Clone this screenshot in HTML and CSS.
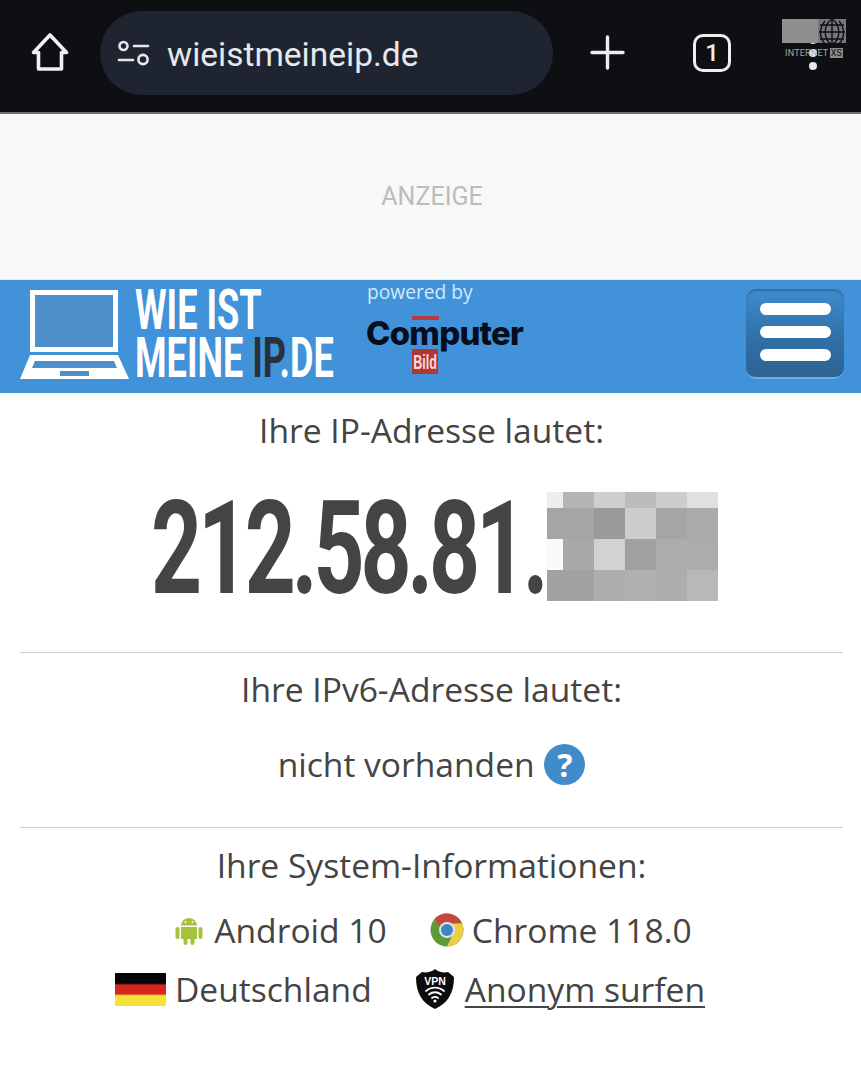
FILE: index.html
```html
<!DOCTYPE html>
<html lang="de">
<head>
    <meta charset="UTF-8">
    <meta name="viewport" content="width=device-width, initial-scale=1.0">
    <title>Wie ist meine IP</title>
    <link rel="stylesheet" href="styles.css">
</head>
<body>

    <!-- Browser toolbar -->
    <div class="toolbar">
        <svg class="home-icon" width="38" height="40" viewBox="0 0 38 40" fill="none" stroke="#f1f1f3" stroke-width="3.6" stroke-linejoin="round" stroke-linecap="round">
            <path d="M2.5 20.5 19 3 35.5 20.5H30.5V37H7.5V20.5Z"/>
        </svg>
        <div class="url-pill">
            <svg width="33" height="26" viewBox="0 0 33 26" fill="none" stroke="#e6e8ee" stroke-width="2.6" stroke-linecap="round">
                <circle cx="6.5" cy="6" r="4"/>
                <path d="M17 6H31"/>
                <path d="M2 20H16"/>
                <circle cx="26" cy="19.5" r="4.6"/>
            </svg>
            <span class="url-text">wieistmeineip.de</span>
        </div>
        <svg class="plus-icon" width="35" height="35" viewBox="0 0 35 35" stroke="#eeeef0" stroke-width="3.4" stroke-linecap="round">
            <path d="M17.5 2V33M2 17.5H33"/>
        </svg>
        <div class="tab-count">1</div>
        <div class="dots">
            <span></span>
            <span></span>
            <span></span>
        </div>
        <!-- Provider watermark over the toolbar -->
        <div class="watermark">
            <svg width="64" height="24" viewBox="0 0 64 24" fill="none" stroke="#111" stroke-width="1">
                <rect width="38" height="24" fill="#8f8f8f" stroke="none"/>
                <rect x="36" width="28" height="24" fill="#77777a" stroke="none"/>
                <path d="M37 13H63M38 6H62M38 20H62M50 0V24" stroke="#101014" stroke-width="1.4"/>
                <path d="M50 0C41 6 41 20 50 26M50 0C59 6 59 20 50 26M43 2C37 9 37 18 43 25M57 2C63 9 63 18 57 25" stroke="#101014" stroke-width="1.4"/>
            </svg>
            <div class="watermark-text">INTERNET <span class="watermark-xs">XS</span></div>
        </div>
    </div>

    <!-- Ad slot -->
    <div class="ad-slot">ANZEIGE</div>

    <!-- Site header -->
    <header class="site-header">
        <svg class="laptop" width="109" height="89" viewBox="0 0 109 89">
            <path d="M10 0H98V62H10Z M15 5V57H93V5Z" fill="#fff" fill-rule="evenodd"/>
            <path fill="#fff" d="M10 65H98L109 89H0Z"/>
            <path fill="#4d90cc" d="M15 5H93V57H15Z"/>
            <path fill="#4d90cc" d="M15 71H94L97 78H12Z"/>
            <path fill="#4d90cc" d="M40 81H69V86H40Z"/>
        </svg>
        <div class="site-name">
            <div class="site-name-line">WIE IST</div>
            <div class="site-name-line">MEINE <span class="site-name-dark">IP</span>.DE</div>
        </div>
        <div class="powered">
            <div class="powered-by">powered by</div>
            <div class="cb-logo">
                <span class="cb-bar"></span>
                <div class="cb-word">Computer</div>
                <div class="cb-bild"><span class="cb-bild-text">Bild</span></div>
            </div>
        </div>
        <div class="menu-button">
            <span></span>
            <span></span>
            <span></span>
        </div>
    </header>

    <main class="content">
        <p class="line line-first">Ihre IP-Adresse lautet:</p>
        <div class="ip-row">
            <div class="ip-box"><span class="ip-text">212.58.81.</span></div>
            <svg class="ip-mosaic" width="171" height="109" viewBox="0 0 171 109" shape-rendering="crispEdges">
                <rect x="0" y="0" width="16" height="16" fill="#eeeeee"/><rect x="16" y="0" width="31" height="16" fill="#b5b5b5"/><rect x="47" y="0" width="31" height="16" fill="#cfcfcf"/><rect x="78" y="0" width="31" height="16" fill="#bcbcbc"/><rect x="109" y="0" width="31" height="16" fill="#cdcdcd"/><rect x="140" y="0" width="31" height="16" fill="#e0e0e0"/>
                <rect x="0" y="16" width="16" height="31" fill="#a5a5a5"/><rect x="16" y="16" width="31" height="31" fill="#a5a5a5"/><rect x="47" y="16" width="31" height="31" fill="#9a9a9a"/><rect x="78" y="16" width="31" height="31" fill="#cdcdcd"/><rect x="109" y="16" width="31" height="31" fill="#a5a5a5"/><rect x="140" y="16" width="31" height="31" fill="#aaaaaa"/>
                <rect x="0" y="47" width="16" height="31" fill="#fafafa"/><rect x="16" y="47" width="31" height="31" fill="#a8a8a8"/><rect x="47" y="47" width="31" height="31" fill="#d2d2d2"/><rect x="78" y="47" width="31" height="31" fill="#a0a0a0"/><rect x="109" y="47" width="31" height="31" fill="#acacac"/><rect x="140" y="47" width="31" height="31" fill="#acacac"/>
                <rect x="0" y="78" width="16" height="31" fill="#a2a2a2"/><rect x="16" y="78" width="31" height="31" fill="#a2a2a2"/><rect x="47" y="78" width="31" height="31" fill="#aeaeae"/><rect x="78" y="78" width="31" height="31" fill="#b0b0b0"/><rect x="109" y="78" width="31" height="31" fill="#adadad"/><rect x="140" y="78" width="31" height="31" fill="#b8b8b8"/>
            </svg>
        </div>

        <hr class="rule rule-ip">

        <p class="line line-v6">Ihre IPv6-Adresse lautet:</p>
        <p class="line line-none">nicht vorhanden <span class="help-badge">?</span></p>

        <hr class="rule rule-v6">

        <p class="line line-system">Ihre System-Informationen:</p>
        <div class="info-row info-row-one">
            <div class="info-item">
                <svg class="icon-android" width="28" height="30" viewBox="0 0 28 30" fill="#a4c33c">
                    <path d="M6 10.5C6.3 6 10 3 14 3S21.700 6 22 10.5Z"/>
                    <path d="M6 12H22V24H6Z"/>
                    <rect x="0.500" y="12" width="4" height="12" rx="2"/>
                    <rect x="23.500" y="12" width="4" height="12" rx="2"/>
                    <rect x="8.500" y="22" width="4" height="8" rx="2"/>
                    <rect x="15.500" y="22" width="4" height="8" rx="2"/>
                    <circle cx="10.500" cy="7" r="0.900" fill="#fff"/>
                    <circle cx="17.500" cy="7" r="0.900" fill="#fff"/>
                </svg>
                <span>Android 10</span>
            </div>
            <div class="info-item info-chrome">
                <svg class="icon-chrome" width="34" height="34" viewBox="0 0 34 34">
                    <circle cx="17" cy="17" r="16.500" fill="#5f9a3a"/>
                    <path d="M17 0.500A16.500 16.500 0 0 1 32 10.500H17A7 7 0 0 0 10.500 14L4.500 6A16.500 16.500 0 0 1 17 0.500Z" fill="#c9463f"/>
                    <path d="M32 10.500A16.500 16.500 0 0 1 17 33.500L22.500 22A7 7 0 0 0 23.500 14.500L22 10.500Z" fill="#eccf45"/>
                    <circle cx="17" cy="17" r="8" fill="#dfe3e8"/>
                    <circle cx="17" cy="17" r="6" fill="#3f83c9"/>
                </svg>
                <span>Chrome 118.0</span>
            </div>
        </div>
        <div class="info-row info-row-two">
            <div class="info-item">
                <div class="flag"></div>
                <span>Deutschland</span>
            </div>
            <div class="info-item info-vpn">
                <svg class="icon-vpn" width="40" height="40" viewBox="0 0 40 40">
                    <path d="M20 0C23 3 29 4 33 3L39 8C39 24 33 34 20 40C7 34 1 24 1 8L7 3C11 4 17 3 20 0Z" fill="#0c0c0e"/>
                    <text x="20" y="15.500" class="vpn-label">VPN</text>
                    <g fill="none" stroke="#fff" stroke-width="1.800" stroke-linecap="round">
                        <path d="M11 22C16 17.500 24 17.500 29 22"/>
                        <path d="M14 25.500C17.500 22.500 22.500 22.500 26 25.500"/>
                        <path d="M17 29C18.800 27.700 21.200 27.700 23 29"/>
                    </g>
                    <circle cx="20" cy="32" r="1.600" fill="#fff"/>
                </svg>
                <a class="vpn-link" href="#">Anonym surfen</a>
            </div>
        </div>
    </main>

</body>
</html>
```

FILE: styles.css
```css
body {
    margin: 0;
    font-family: "Open Sans", Arial, sans-serif;
    color: #444;
    background-color: #fff;
}

/* Browser toolbar */
.toolbar {
    position: relative;
    display: flex;
    align-items: center;
    height: 112px;
    padding-left: 31px;
    box-sizing: content-box;
    background-color: #0e0f13;
    border-bottom: 2px solid #6e6d7c;
}

.home-icon {
    flex: none;
    margin-top: -8px;
}

.url-pill {
    display: flex;
    align-items: center;
    flex: none;
    width: 453px;
    height: 84px;
    margin-left: 31px;
    margin-top: -6px;
    padding-left: 17px;
    box-sizing: border-box;
    background-color: #1f2530;
    border-radius: 42px;
}

.url-text {
    margin-left: 17px;
    padding-top: 3px;
    font-family: Roboto, Arial, sans-serif;
    font-size: 33.5px;
    color: #e6e8ee;
}

.plus-icon {
    flex: none;
    margin-left: 37px;
    margin-top: -7px;
}

.tab-count {
    display: flex;
    align-items: center;
    justify-content: center;
    flex: none;
    width: 38px;
    height: 38px;
    margin-left: 68px;
    margin-top: -6px;
    box-sizing: border-box;
    border: 3.5px solid #eeeef0;
    border-radius: 10px;
    font-family: Roboto, Arial, sans-serif;
    font-size: 24px;
    font-weight: 500;
    color: #eeeef0;
}

.dots {
    display: flex;
    flex-direction: column;
    gap: 5px;
    flex: none;
    margin-left: 78px;
    margin-top: -7px;
}

.dots span {
    width: 8px;
    height: 8px;
    border-radius: 50%;
    background-color: #e8e8ea;
}

.watermark {
    position: absolute;
    left: 782px;
    top: 19px;
    width: 64px;
}

.watermark svg {
    display: block;
}

.watermark-text {
    margin-top: 5px;
    padding-left: 3px;
    font-family: Roboto, Arial, sans-serif;
    font-size: 9px;
    line-height: 10px;
    letter-spacing: 0.2px;
    white-space: nowrap;
    color: #a8a8a8;
}

.watermark-xs {
    margin-left: -1px;
    padding: 0 1px;
    background-color: #8a8a8a;
    color: #111;
}

/* Ad slot */
.ad-slot {
    display: flex;
    align-items: center;
    justify-content: center;
    height: 165px;
    padding-left: 3px;
    background-color: #f8f8f8;
    border-bottom: 1px solid #e8eef4;
    font-family: Roboto, Arial, sans-serif;
    font-size: 25px;
    color: #bcbcbc;
}

/* Site header */
.site-header {
    display: flex;
    align-items: flex-start;
    height: 113px;
    padding-left: 20px;
    background-color: #4192d9;
}

.laptop {
    flex: none;
    margin-top: 10px;
}

.site-name {
    flex: none;
    width: 232px;
    margin-left: 6px;
    margin-top: 6px;
}

.site-name-line {
    height: 48px;
    font-family: Roboto, Arial, sans-serif;
    font-size: 56px;
    font-weight: 700;
    line-height: 48px;
    color: #fff;
    white-space: nowrap;
    transform: scaleX(0.645);
    transform-origin: left center;
}

.site-name-dark {
    color: #2a3038;
}

.powered {
    flex: none;
    width: 379px;
}

.powered-by {
    height: 25px;
    margin-top: -1px;
    font-size: 19.2px;
    line-height: 25px;
    color: #d3e9fa;
}

.cb-logo {
    position: relative;
    width: 160px;
    margin-left: -1px;
    margin-top: 13px;
}

.cb-bar {
    position: absolute;
    left: 46px;
    top: -1px;
    width: 27px;
    height: 4px;
    background-color: #b93a3a;
}

.cb-word {
    height: 32px;
    font-family: Inter, Arial, sans-serif;
    font-size: 33px;
    font-weight: 800;
    line-height: 32px;
    letter-spacing: -0.8px;
    color: #070d1c;
}

.cb-bild {
    width: 26px;
    height: 25px;
    margin-left: 46px;
    background-color: #b53434;
    font-family: "Liberation Sans", Arial, sans-serif;
    font-size: 21px;
    font-weight: 700;
    line-height: 25px;
    color: #f6dcdc;
    overflow: visible;
}

.cb-bild-text {
    display: block;
    width: 40px;
    padding-left: 2px;
    white-space: nowrap;
    transform: scaleX(0.6);
    transform-origin: left center;
}

.menu-button {
    display: flex;
    flex-direction: column;
    align-items: center;
    gap: 11px;
    flex: none;
    width: 98px;
    height: 90px;
    margin-top: 9px;
    padding-top: 14px;
    box-sizing: border-box;
    border-radius: 10px;
    background: linear-gradient(#3f8ccf, #2f6ea6 60%, #2e6391);
    border-bottom: 2px solid #69aee6;
    box-shadow: inset 0 2px 2px #2f6ea6;
}

.menu-button span {
    width: 71px;
    height: 12px;
    border-radius: 6px;
    background-color: #fff;
}

/* Main content */
.content {
    padding: 0 18px 0 20px;
    text-align: center;
}

.line {
    height: 44px;
    margin: 0;
    font-size: 33.6px;
    line-height: 44px;
    color: #444;
}

.line-first {
    margin-top: 15px;
}

.line-v6 {
    margin-top: 14px;
}

.line-none {
    margin-top: 31px;
}

.line-system {
    margin-top: 15px;
}

.ip-row {
    display: flex;
    justify-content: center;
    margin-top: 40px;
    padding-left: 8px;
}

.ip-box {
    width: 393px;
    height: 109px;
    text-align: left;
}

.ip-text {
    display: block;
    width: 393px;
    height: 109px;
    margin-left: -3px;
    font-family: Roboto, Arial, sans-serif;
    font-size: 129px;
    font-weight: 700;
    line-height: 113px;
    letter-spacing: -6px;
    color: #444;
    white-space: nowrap;
    transform: scaleX(0.69);
    transform-origin: left center;
}

.ip-mosaic {
    display: block;
    flex: none;
}

.rule {
    height: 1px;
    margin: 0;
    border: none;
    background-color: #cfcfcf;
}

.rule-ip {
    margin-top: 51px;
}

.rule-v6 {
    margin-top: 41px;
}

.help-badge {
    display: inline-block;
    width: 41px;
    height: 41px;
    margin-left: 1px;
    border-radius: 50%;
    background-color: #428bca;
    font-size: 32px;
    font-weight: 700;
    line-height: 41px;
    color: #fff;
    vertical-align: top;
    position: relative;
    top: 2px;
}

/* System info rows */
.info-row {
    display: flex;
    justify-content: center;
    height: 44px;
    font-size: 33.6px;
    line-height: 44px;
    color: #444;
}

.info-row-one {
    margin-top: 21px;
    padding-left: 4px;
}

.info-row-two {
    margin-top: 15px;
    padding-right: 43px;
}

.info-item {
    display: flex;
    align-items: center;
}

.icon-android {
    margin-right: 11px;
}

.info-chrome {
    margin-left: 43px;
}

.icon-chrome {
    margin-right: 8px;
}

.flag {
    width: 51px;
    height: 33px;
    margin-right: 9px;
    background: linear-gradient(#050505 0 31%, #d8261f 37% 63%, #f5e33a 69%);
}

.info-vpn {
    margin-left: 44px;
}

.icon-vpn {
    margin-right: 10px;
    margin-left: -1px;
}

.vpn-label {
    font-family: "Liberation Sans", Arial, sans-serif;
    font-size: 10.5px;
    font-weight: 700;
    text-anchor: middle;
    fill: #fff;
}

.vpn-link {
    color: #444;
    text-decoration: underline;
    text-decoration-thickness: 2px;
    text-underline-offset: 4px;
}
```
